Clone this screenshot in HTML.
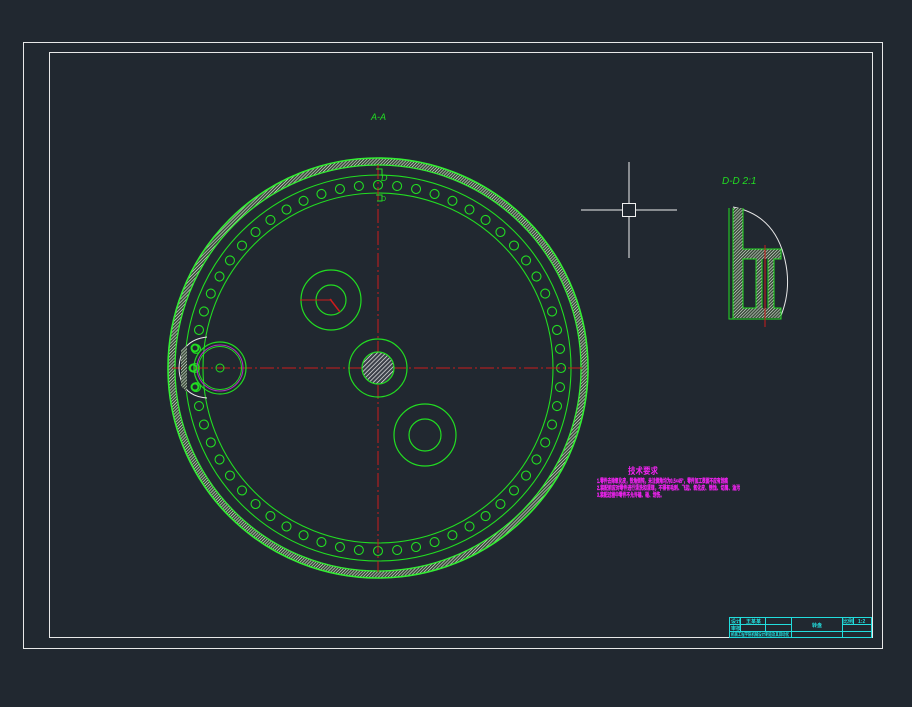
<!DOCTYPE html>
<html><head><meta charset="utf-8"><style>
html,body{margin:0;padding:0;background:#212830;}
svg{display:block}
text{font-family:"Liberation Sans","Noto Sans CJK SC",sans-serif}
</style></head><body>
<svg width="912" height="707" viewBox="0 0 912 707" xmlns="http://www.w3.org/2000/svg">
<defs>
<pattern id="h" width="2.2" height="2.2" patternUnits="userSpaceOnUse" patternTransform="rotate(45)">
<rect width="2.2" height="2.2" fill="#3a4a3a"/><line x1="0" y1="0" x2="0" y2="2.2" stroke="#e8f4e8" stroke-width="1.1"/></pattern>
<pattern id="h2" width="3" height="3" patternUnits="userSpaceOnUse" patternTransform="rotate(45)">
<rect width="3" height="3" fill="#3a3f48"/><line x1="0" y1="0" x2="0" y2="3" stroke="#f0f0f0" stroke-width="1.4"/></pattern>
<g id="g6" fill="none" stroke="#22dd22" stroke-width="1.1">
<circle cx="378" cy="185" r="4.5"/>
<circle cx="378" cy="185" r="4.5" transform="rotate(6 378 368)"/>
<circle cx="378" cy="185" r="4.5" transform="rotate(12 378 368)"/>
<circle cx="378" cy="185" r="4.5" transform="rotate(18 378 368)"/>
<circle cx="378" cy="185" r="4.5" transform="rotate(24 378 368)"/>
<circle cx="378" cy="185" r="4.5" transform="rotate(30 378 368)"/>
</g>
</defs>
<rect x="0" y="0" width="912" height="707" fill="#212830"/>
<rect x="23.5" y="42.5" width="859" height="606" fill="none" stroke="#e8e8e8" stroke-width="1"/>
<rect x="49.5" y="52.5" width="823" height="585" fill="none" stroke="#e8e8e8" stroke-width="1"/>

<text x="371" y="120" fill="#22dd22" font-size="9" font-style="italic">A-A</text>

<!-- gear -->
<circle cx="378" cy="368" r="206.5" fill="none" stroke="url(#h)" stroke-width="7"/>
<circle cx="378" cy="368" r="210" fill="none" stroke="#33ee33" stroke-width="1.6"/>
<circle cx="378" cy="368" r="203" fill="none" stroke="#33ee33" stroke-width="1.3"/>
<circle cx="378" cy="368" r="193" fill="none" stroke="#22dd22" stroke-width="1.1"/>
<circle cx="378" cy="368" r="175" fill="none" stroke="#22dd22" stroke-width="1.1"/>
<use href="#g6"/>
<use href="#g6" transform="rotate(36 378 368)"/>
<use href="#g6" transform="rotate(72 378 368)"/>
<use href="#g6" transform="rotate(108 378 368)"/>
<use href="#g6" transform="rotate(144 378 368)"/>
<use href="#g6" transform="rotate(180 378 368)"/>
<use href="#g6" transform="rotate(216 378 368)"/>
<use href="#g6" transform="rotate(252 378 368)"/>
<use href="#g6" transform="rotate(288 378 368)"/>
<use href="#g6" transform="rotate(324 378 368)"/>

<!-- centerlines -->
<line x1="172" y1="368" x2="585" y2="368" stroke="#cc1c1c" stroke-width="1" stroke-dasharray="14 3 2 3"/>
<line x1="378" y1="165" x2="378" y2="572" stroke="#cc1c1c" stroke-width="1" stroke-dasharray="14 3 2 3"/>

<!-- hub -->
<circle cx="378" cy="368" r="29" fill="none" stroke="#22dd22" stroke-width="1.2"/>
<circle cx="378" cy="368" r="16" fill="url(#h2)" stroke="#22dd22" stroke-width="1.2"/>

<circle cx="331" cy="300" r="30" fill="none" stroke="#22dd22" stroke-width="1.2"/>
<circle cx="331" cy="300" r="15" fill="none" stroke="#22dd22" stroke-width="1.2"/>
<line x1="300" y1="300" x2="332" y2="300" stroke="#cc1c1c" stroke-width="1"/>
<line x1="330" y1="299" x2="340" y2="312" stroke="#cc1c1c" stroke-width="1.5"/>

<circle cx="425" cy="435" r="31" fill="none" stroke="#22dd22" stroke-width="1.2"/>
<circle cx="425" cy="435" r="16" fill="none" stroke="#22dd22" stroke-width="1.2"/>

<!-- left detail -->
<path d="M207 337 Q180 340 179 368 Q180 396 207 398" fill="none" stroke="#e8e8e8" stroke-width="1"/>
<path d="M181 350 L187 345 L187 392 L181 386 Z" fill="url(#h)"/>
<circle cx="220" cy="368" r="26" fill="none" stroke="#22dd22" stroke-width="1.2"/>
<circle cx="220" cy="368" r="23" fill="none" stroke="#b030c0" stroke-width="1"/>
<circle cx="220" cy="368" r="21.5" fill="none" stroke="#22dd22" stroke-width="1"/>
<circle cx="220" cy="368" r="4" fill="none" stroke="#22dd22" stroke-width="1"/>
<circle cx="195" cy="348" r="3.5" fill="none" stroke="#22dd22" stroke-width="2"/>
<circle cx="193" cy="368" r="3.5" fill="none" stroke="#22dd22" stroke-width="2"/>
<circle cx="195" cy="387" r="3.5" fill="none" stroke="#22dd22" stroke-width="2"/>

<!-- D marker at top -->
<path d="M376 169 h6 v7 M376 195 h6 v6 h-5" fill="none" stroke="#22dd22" stroke-width="1"/>
<text x="381" y="181" fill="#22dd22" font-size="9" font-style="italic">D</text>
<text x="381" y="201" fill="#22dd22" font-size="7">D</text>

<!-- crosshair -->
<line x1="581" y1="210" x2="677" y2="210" stroke="#f0f0f0" stroke-width="1"/>
<line x1="629" y1="162" x2="629" y2="258" stroke="#f0f0f0" stroke-width="1"/>
<rect x="622.5" y="203.5" width="13" height="13" fill="#212830" stroke="#f0f0f0" stroke-width="1"/>

<!-- D-D detail -->
<text x="722" y="184" fill="#22dd22" font-size="10" font-style="italic">D-D 2:1</text>
<path d="M733 207 Q775 215 785 260 Q792 290 780 318" fill="none" stroke="#e8e8e8" stroke-width="1"/>
<rect x="733" y="208" width="10" height="110" fill="url(#h)"/>
<rect x="743" y="249" width="38" height="10" fill="url(#h)"/>
<rect x="743" y="308" width="38" height="10" fill="url(#h)"/>
<rect x="756" y="259" width="6" height="49" fill="url(#h)"/>
<rect x="768" y="259" width="6" height="49" fill="url(#h)"/>
<path d="M729 208 V319 H781 V308 H774 V259 H781 V249 H743 V208 M743 308 V259 H756 V308 Z M762 259 V308 M768 259 V308 M733 208 V319" fill="none" stroke="#22dd22" stroke-width="1"/>
<line x1="765" y1="245" x2="765" y2="327" stroke="#cc1c1c" stroke-width="1"/>

<!-- tech text -->
<text x="628" y="474" fill="#ee22ee" font-size="9" font-weight="bold" font-family="Noto Sans CJK SC,sans-serif" textLength="30" lengthAdjust="spacingAndGlyphs">技术要求</text>
<g fill="#ee22ee" font-size="6" font-weight="bold" font-family="Noto Sans CJK SC,sans-serif" stroke="#ee22ee" stroke-width="0.3">
<text x="597" y="483" textLength="131" lengthAdjust="spacingAndGlyphs">1.零件去除氧化皮，锐角倒钝，未注倒角均为0.5×45°，零件加工表面不应有划痕</text>
<text x="597" y="490" textLength="143" lengthAdjust="spacingAndGlyphs">2.装配前应对零件进行清洗和清理，不得有毛刺、飞边、氧化皮、锈蚀、切屑、油污</text>
<text x="597" y="497" textLength="67" lengthAdjust="spacingAndGlyphs">3.装配过程中零件不允许磕、碰、划伤。</text>
</g>

<!-- title block -->
<g fill="none" stroke="#22dddd" stroke-width="1">
<rect x="729.5" y="617.5" width="142" height="20"/>
<line x1="729" y1="624.5" x2="791" y2="624.5"/>
<line x1="729" y1="631.5" x2="872" y2="631.5"/>
<line x1="842" y1="624.5" x2="872" y2="624.5"/>
<line x1="740.5" y1="617" x2="740.5" y2="631"/>
<line x1="765.5" y1="617" x2="765.5" y2="631"/>
<line x1="791.5" y1="617" x2="791.5" y2="637"/>
<line x1="842.5" y1="617" x2="842.5" y2="637"/>
<line x1="853.5" y1="617" x2="853.5" y2="624"/>
</g>
<g fill="#22dddd" font-size="5" font-weight="bold" font-family="Noto Sans CJK SC,sans-serif">
<text x="731" y="623">设计</text><text x="746" y="623">王某某</text>
<text x="731" y="630">审核</text>
<text x="731" y="636" textLength="58" lengthAdjust="spacingAndGlyphs">机械工程学院机械设计制造及其自动化</text>
<text x="812" y="627">转盘</text>
<text x="843" y="623">比例</text><text x="858" y="623">1:2</text>
</g>
</svg>
</body></html>
